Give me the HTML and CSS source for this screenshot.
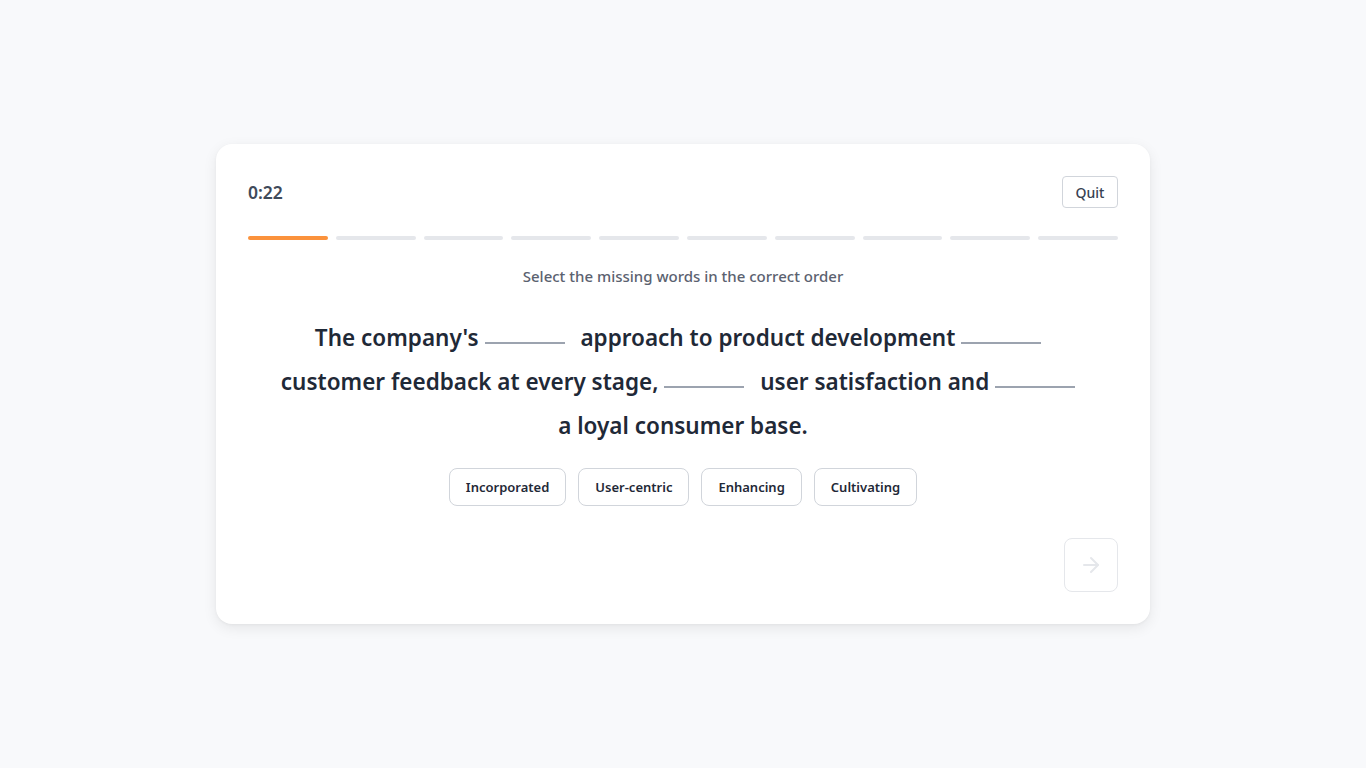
FILE: index.html
```html
<!DOCTYPE html>
<html lang="en">
<head>
<meta charset="utf-8">
<title>Quiz</title>
<link rel="stylesheet" href="styles.css">
</head>
<body>
<main class="page">
  <section class="card">
    <header class="card-head">
      <span class="timer">0:22</span>
      <button class="quit">Quit</button>
    </header>
    <div class="progress">
      <span class="seg active"></span>
      <span class="seg"></span>
      <span class="seg"></span>
      <span class="seg"></span>
      <span class="seg"></span>
      <span class="seg"></span>
      <span class="seg"></span>
      <span class="seg"></span>
      <span class="seg"></span>
      <span class="seg"></span>
    </div>
    <p class="instruction">Select the missing words in the correct order</p>
    <p class="sentence">The company's <span class="blank"></span> approach to product development <span class="blank"></span> customer feedback at every stage, <span class="blank"></span> user satisfaction and <span class="blank"></span> a loyal consumer base.</p>
    <div class="options">
      <button class="chip">Incorporated</button>
      <button class="chip">User-centric</button>
      <button class="chip">Enhancing</button>
      <button class="chip">Cultivating</button>
    </div>
    <div class="foot">
      <button class="next" disabled aria-label="Next">
        <svg width="24" height="24" viewBox="0 0 24 24" fill="none" stroke="currentColor" stroke-width="2" stroke-linecap="round" stroke-linejoin="round"><path d="M5 12h14"/><path d="M12 5l7 7-7 7"/></svg>
      </button>
    </div>
  </section>
</main>
</body>
</html>
```
FILE: styles.css
```css
* { box-sizing: border-box; }
html, body { margin: 0; padding: 0; }
body {
  background: #f8f9fb;
  font-family: "Noto Sans", "Open Sans", sans-serif;
  color: #1f2937;
}
.page {
  min-height: 768px;
  display: flex;
  align-items: center;
  justify-content: center;
}
.card {
  width: 934px;
  background: #ffffff;
  border-radius: 16px;
  box-shadow: 0 4px 14px rgba(0, 0, 0, 0.08), 0 1px 3px rgba(0,0,0,0.04);
  padding: 32px;
  display: flex;
  flex-direction: column;
}
.card-head {
  display: flex;
  justify-content: space-between;
  align-items: center;
  height: 32px;
}
.timer {
  font-size: 17.5px;
  font-weight: 600;
  color: #3f4a5a;
}
.quit {
  font-family: inherit;
  height: 32px;
  width: 56px;
  padding: 0;
  font-size: 14px;
  font-weight: 500;
  color: #374151;
  background: #fff;
  border: 1px solid #d1d5db;
  border-radius: 4px;
}
.progress {
  display: flex;
  gap: 8px;
  margin-top: 28px;
}
.seg {
  flex: 1;
  height: 4px;
  border-radius: 2px;
  background: #e5e7eb;
}
.seg.active { background: #fb923c; }
.instruction {
  margin: 26px 0 0;
  text-align: center;
  font-size: 15px;
  font-weight: 500;
  line-height: 20px;
  color: #5b6270;
}
.sentence {
  margin: 30px auto 0;
  max-width: 810px;
  text-align: center;
  font-size: 22.5px;
  font-weight: 600;
  line-height: 44px;
  color: #1f2937;
}
.blank {
  display: inline-block;
  width: 80px;
  height: 2px;
  background: #9ca3af;
  vertical-align: 0.1em;
  margin-right: 10px;
}
.options {
  display: flex;
  justify-content: center;
  gap: 12px;
  margin-top: 20px;
}
.chip {
  font-family: inherit;
  height: 38px;
  padding: 0 16px;
  font-size: 13px;
  font-weight: 600;
  color: #1f2937;
  background: #fff;
  border: 1px solid #d1d5db;
  border-radius: 8px;
}
.foot {
  display: flex;
  justify-content: flex-end;
  margin-top: 32px;
}
.next {
  width: 54px;
  height: 54px;
  display: flex;
  align-items: center;
  justify-content: center;
  background: #fff;
  border: 1px solid #e5e7eb;
  border-radius: 8px;
  color: #e5e7eb;
  padding: 0;
}
```
